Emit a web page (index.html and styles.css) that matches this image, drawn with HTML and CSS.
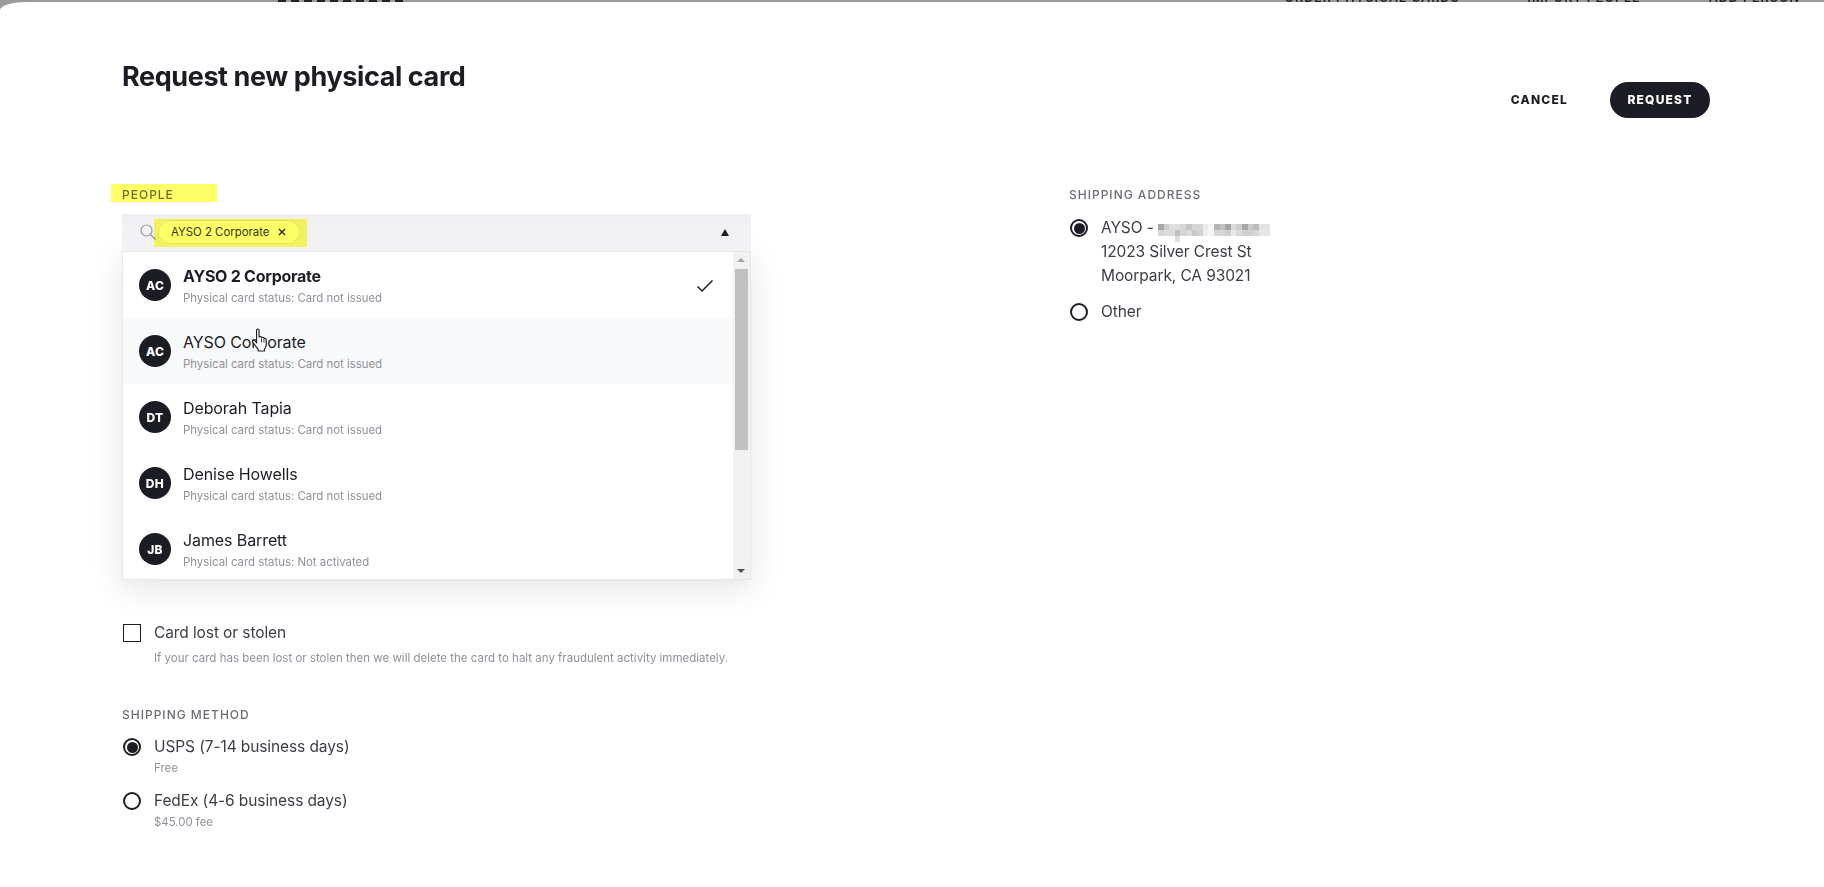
FILE: index.html
```html
<!DOCTYPE html>
<html lang="en">
<head>
<meta charset="utf-8">
<title>Request new physical card</title>
<link rel="stylesheet" href="styles.css">
</head>
<body>
<header class="backdrop">
  <div class="backdrop-logo"></div>
  <nav class="backdrop-nav">
    <span>ORDER PHYSICAL CARDS</span>
    <span>IMPORT PEOPLE</span>
    <span>ADD PERSON</span>
  </nav>
</header>
<main class="sheet">
  <div class="sheet-head">
    <h1 class="title">Request new physical card</h1>
    <div class="actions">
      <button class="btn-text">CANCEL</button>
      <button class="btn-primary">REQUEST</button>
    </div>
  </div>
  <div class="columns">
    <section class="col-left">
      <div class="label people-label">PEOPLE<i class="marker marker-label"></i></div>
      <div class="select">
        <svg class="search" width="16" height="16" viewBox="0 0 16 16"><circle cx="6.500" cy="6.500" r="5.500" fill="none" stroke="#9a9ba2" stroke-width="1.200"/><path d="M10.500 10.500 15.500 15.500" stroke="#9a9ba2" stroke-width="1.500" fill="none"/></svg>
        <span class="chip">AYSO 2 Corporate<svg class="chip-x" width="8" height="8" viewBox="0 0 8 8"><path d="M1 1l6 6M7 1 1 7" stroke="#1c1d24" stroke-width="1.200"/></svg></span>
        <i class="marker marker-chip"></i>
        <span class="caret"></span>
      </div>
      <div class="dropdown">
        <div class="list">
          <div class="row">
            <span class="avatar">AC</span>
            <div class="row-text"><div class="name name-bold">AYSO 2 Corporate</div><div class="sub">Physical card status: Card not issued</div></div>
            <svg class="check" width="18" height="14" viewBox="0 0 18 14"><path d="M1.500 7.500 6 12 16.500 1.500" fill="none" stroke="#1c1d24" stroke-width="1.500"/></svg>
          </div>
          <div class="row row-hover">
            <span class="avatar">AC</span>
            <div class="row-text"><div class="name">AYSO Corporate</div><div class="sub">Physical card status: Card not issued</div></div>
            <svg class="cursor" width="19" height="24" viewBox="0 0 17 23" preserveAspectRatio="none"><path d="M5 2c0-1.300 2.200-1.300 2.200 0V9c0-1 2-1.200 2.200 0v.5c.2-1 2.100-1 2.200.2v.8c.3-1 2-.8 2 .5V16c0 2-1 3.200-1.600 4.500V22H6.500v-1.500C5 18.500 3 16 1.500 13.500c-.8-1.300.8-2.400 1.800-1.400L5 14Z" fill="#fff" stroke="#1c1d24" stroke-width="1"/><path d="M9.400 10v4M11.600 10.500V14" stroke="#1c1d24" stroke-width=".8" fill="none"/></svg>
          </div>
          <div class="row">
            <span class="avatar">DT</span>
            <div class="row-text"><div class="name">Deborah Tapia</div><div class="sub">Physical card status: Card not issued</div></div>
          </div>
          <div class="row">
            <span class="avatar">DH</span>
            <div class="row-text"><div class="name">Denise Howells</div><div class="sub">Physical card status: Card not issued</div></div>
          </div>
          <div class="row">
            <span class="avatar">JB</span>
            <div class="row-text"><div class="name">James Barrett</div><div class="sub">Physical card status: Not activated</div></div>
          </div>
        </div>
        <div class="scrollbar">
          <span class="arrow-up"></span>
          <span class="thumb"></span>
          <span class="arrow-down"></span>
        </div>
      </div>
      <div class="lost">
        <div class="option">
          <span class="box"></span>
          <span class="option-title">Card lost or stolen</span>
        </div>
        <div class="hint">If your card has been lost or stolen then we will delete the card to halt any fraudulent activity immediately.</div>
      </div>
      <div class="label method-label">SHIPPING METHOD</div>
      <div class="option option-method">
        <span class="radio radio-on"></span>
        <div><div class="option-title">USPS (7-14 business days)</div><div class="hint">Free</div></div>
      </div>
      <div class="option option-method">
        <span class="radio"></span>
        <div><div class="option-title">FedEx (4-6 business days)</div><div class="hint">$45.00 fee</div></div>
      </div>
    </section>
    <section class="col-right">
      <div class="label">SHIPPING ADDRESS</div>
      <div class="option address">
        <span class="radio radio-on"></span>
        <div class="option-title">
          <div>AYSO - <svg class="redact" width="112" height="18" viewBox="0 0 20 3" preserveAspectRatio="none" shape-rendering="crispEdges">
            <rect x="0" y="0" width="1" height="1" fill="#a8a8a8"/><rect x="1" y="0" width="1" height="1" fill="#cdcdcd"/><rect x="2" y="0" width="2" height="1" fill="#dedede"/><rect x="4" y="0" width="1" height="1" fill="#d6d6d6"/><rect x="5" y="0" width="1" height="1" fill="#c6c6c6"/><rect x="6" y="0" width="2" height="1" fill="#d6d6d6"/><rect x="8" y="0" width="1" height="1" fill="#ebebeb"/><rect x="9" y="0" width="1" height="1" fill="#f4f4f4"/><rect x="10" y="0" width="1" height="1" fill="#b4b4b4"/><rect x="11" y="0" width="1" height="1" fill="#c2c2c2"/><rect x="12" y="0" width="1" height="1" fill="#a4a4a4"/><rect x="13" y="0" width="1" height="1" fill="#dcdcdc"/><rect x="14" y="0" width="1" height="1" fill="#cecece"/><rect x="15" y="0" width="1" height="1" fill="#a8a8a8"/><rect x="16" y="0" width="1" height="1" fill="#c8c8c8"/><rect x="17" y="0" width="1" height="1" fill="#bcbcbc"/><rect x="18" y="0" width="2" height="1" fill="#e2e2e2"/>
            <rect x="0" y="1" width="1" height="1" fill="#d6d6d6"/><rect x="1" y="1" width="2" height="1" fill="#dcdcdc"/><rect x="3" y="1" width="1" height="1" fill="#c0c0c0"/><rect x="4" y="1" width="1" height="1" fill="#d4d4d4"/><rect x="5" y="1" width="1" height="1" fill="#dadada"/><rect x="6" y="1" width="1" height="1" fill="#c8c8c8"/><rect x="7" y="1" width="1" height="1" fill="#d2d2d2"/><rect x="8" y="1" width="1" height="1" fill="#efefef"/><rect x="9" y="1" width="1" height="1" fill="#f6f6f6"/><rect x="10" y="1" width="2" height="1" fill="#d6d6d6"/><rect x="12" y="1" width="1" height="1" fill="#cecece"/><rect x="13" y="1" width="1" height="1" fill="#e8e8e8"/><rect x="14" y="1" width="1" height="1" fill="#d8d8d8"/><rect x="15" y="1" width="2" height="1" fill="#d0d0d0"/><rect x="17" y="1" width="1" height="1" fill="#d4d4d4"/><rect x="18" y="1" width="2" height="1" fill="#e6e6e6"/>
            <rect x="3" y="2" width="1" height="1" fill="#dedede"/>
          </svg></div>
          <div>12023 Silver Crest St</div>
          <div>Moorpark, CA 93021</div>
        </div>
      </div>
      <div class="option other">
        <span class="radio"></span>
        <span class="option-title">Other</span>
      </div>
    </section>
  </div>
</main>
</body>
</html>
```

FILE: styles.css
```css
* { box-sizing: border-box; }
html, body { height: 100%; margin: 0; }
body {
  background: #9b9b9d;
  font-family: "Inter", "Liberation Sans", sans-serif;
  color: #1c1d24;
  overflow: hidden;
}
.backdrop {
  height: 2px;
  overflow: hidden;
  display: flex;
  justify-content: space-between;
  padding: 0 24px 0 278px;
}
.backdrop-logo {
  width: 128px;
  height: 2px;
  background: repeating-linear-gradient(90deg, #222 0 8px, transparent 8px 13px);
}
.backdrop-nav {
  display: flex;
  gap: 68px;
  font-size: 12.5px;
  font-weight: 600;
  letter-spacing: 1px;
  line-height: 12px;
  margin-top: -8px;
  color: #222;
  white-space: nowrap;
}
.sheet {
  background: #fff;
  border-radius: 28px 0 0 0 / 8px 0 0 0;
  height: 885px;
  padding: 0 0 0 122px;
}
.sheet-head {
  display: flex;
  justify-content: space-between;
  padding-right: 114px;
}
.title {
  margin: 57px 0 0;
  font-size: 27px;
  line-height: 36px;
  font-weight: 700;
  letter-spacing: -0.4px;
}
.actions {
  display: flex;
  align-items: center;
  gap: 42px;
  margin-top: 80px;
}
.btn-text, .btn-primary {
  border: 0;
  font-family: inherit;
  font-size: 12px;
  font-weight: 800;
  letter-spacing: 1.2px;
  padding: 0 0 2px;
}
.btn-text { background: none; color: #1c1d24; }
.btn-primary {
  background: #1c1d24;
  color: #fff;
  width: 100px;
  height: 36px;
  border-radius: 18px;
}
.columns {
  display: flex;
  margin-top: 69px;
}
.col-left { width: 629px; }
.col-right { margin-left: 318px; }
.label {
  font-size: 12px;
  line-height: 16px;
  font-weight: 500;
  letter-spacing: 1px;
  color: #6b6c76;
}
.people-label { position: relative; }
.marker {
  position: absolute;
  background: #ffff66;
  mix-blend-mode: multiply;
  display: block;
}
.marker-label { left: -11px; top: -3px; width: 106px; height: 18px; }
.select {
  position: relative;
  height: 37px;
  margin-top: 11px;
  background: linear-gradient(#f0f0f2, #f2f2f5);
  display: flex;
  align-items: center;
  padding-left: 18px;
}
.search { flex: none; margin-top: -2px; }
.chip {
  display: flex;
  align-items: center;
  margin: -2px 0 0 2px;
  height: 24px;
  padding: 0 13px 0 12px;
  gap: 9px;
  border-radius: 12px;
  border: 1px solid #e2e2e4;
  background: #fff;
  font-size: 11.4px;
  color: #33343c;
}
.chip-x { flex: none; }
.marker-chip { left: 32px; top: 5px; width: 153px; height: 28px; }
.caret {
  position: absolute;
  right: 22px;
  top: 15px;
  width: 0;
  height: 0;
  border-left: 4px solid transparent;
  border-right: 4px solid transparent;
  border-bottom: 7px solid #1c1d24;
}
.dropdown {
  display: flex;
  height: 329px;
  border: 1px solid #e8e8ea;
  border-top-color: #e6e6e8;
  background: #fff;
  box-shadow: 0 8px 30px rgba(28, 29, 36, .12);
}
.list { flex: 1; overflow: hidden; }
.row {
  position: relative;
  display: flex;
  align-items: center;
  height: 66px;
  padding-left: 16px;
  gap: 12px;
}
.row-hover { background: #f8f9fb; }
.avatar {
  flex: none;
  width: 32px;
  height: 32px;
  border-radius: 50%;
  background: #1c1d24;
  color: #fff;
  font-size: 12px;
  font-weight: 800;
  display: flex;
  align-items: center;
  justify-content: center;
  letter-spacing: .3px;
}
.row-text { padding-top: 1px; }
.name { font-size: 16px; line-height: 22px; letter-spacing: -.1px; }
.name-bold { font-weight: 700; letter-spacing: -.25px; }
.sub { font-size: 11.4px; line-height: 16px; margin-top: 3px; color: #8f9099; }
.check { position: absolute; right: 19px; top: 27px; }
.cursor { position: absolute; left: 128px; top: 10px; }
.scrollbar {
  width: 17px;
  background: #f1f1f1;
  position: relative;
  flex: none;
}
.thumb {
  position: absolute;
  left: 2px;
  right: 2px;
  top: 17px;
  height: 181px;
  background: #c1c1c1;
}
.arrow-up, .arrow-down {
  position: absolute;
  left: 4px;
  width: 0;
  height: 0;
  border-left: 4px solid transparent;
  border-right: 4px solid transparent;
}
.arrow-up { top: 6px; border-bottom: 4px solid #a3a3a3; }
.arrow-down { bottom: 6px; border-top: 4px solid #505050; }
.lost { margin-top: 41px; }
.option { display: flex; gap: 13px; padding-left: 1px; }
.option-title { font-size: 15.5px; line-height: 24px; color: #3c3d46; letter-spacing: -.1px; }
.box {
  width: 18px;
  height: 18px;
  border: 1.600px solid #1c1d24;
  margin-top: 3px;
  flex: none;
}
.hint { font-size: 11.4px; line-height: 16px; color: #8f9099; margin-top: 1px; white-space: nowrap; }
.lost .hint { font-size: 11.5px; margin-left: 32px; margin-top: 5px; }
.method-label { margin-top: 41px; }
.option-method { margin-top: 12px; }
.option-method + .option-method { margin-top: 13px; }
.radio {
  flex: none;
  position: relative;
  width: 18px;
  height: 18px;
  border: 2px solid #1c1d24;
  border-radius: 50%;
  margin-top: 3px;
}
.radio-on::after {
  content: "";
  position: absolute;
  inset: 1.500px;
  border-radius: 50%;
  background: #1c1d24;
}
.address { margin-top: 13px; }
.other { margin-top: 12px; }
.redact { display: inline-block; vertical-align: -5px; margin-block: -4px; }
```
